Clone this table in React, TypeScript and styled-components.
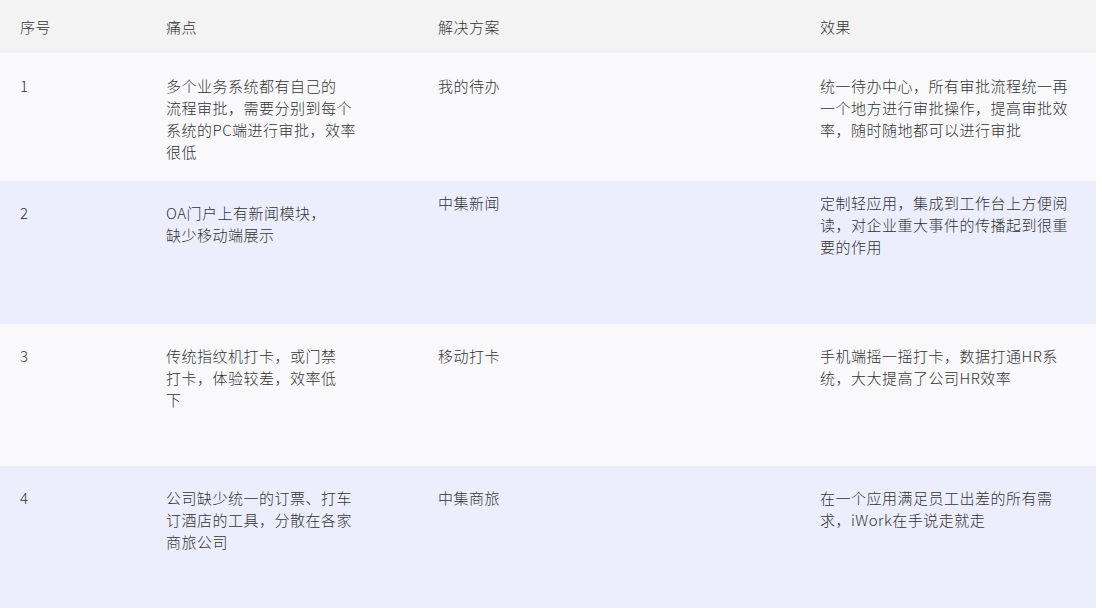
import React from 'react';
import styled, { createGlobalStyle } from 'styled-components';

const GlobalStyle = createGlobalStyle`
  body {
    margin: 0;
    background: #ffffff;
    font-family: "Noto Sans CJK SC", "Noto Sans", sans-serif;
  }
`;

const Table = styled.div`
  width: 1096px;
  color: #333333;
  font-size: 15px;
  font-weight: 300;
  line-height: 22px;
`;

const Row = styled.div<{ $bg: string; $height: number }>`
  display: grid;
  grid-template-columns: 146px 272px 382px 1fr;
  align-items: start;
  height: ${(p) => p.$height}px;
  background: ${(p) => p.$bg};
`;

const HeaderRow = styled(Row)`
  align-items: center;
`;

const Cell = styled.div<{ $top?: number }>`
  padding: ${(p) => p.$top ?? 0}px 0 0 20px;
  white-space: nowrap;
  letter-spacing: 0.5px;
`;

interface Item {
  no: string;
  pain: string[];
  solution: string;
  effect: string[];
  bg: string;
  height: number;
  painTop: number;
  sideTop: number;
}

const items: Item[] = [
  {
    no: '1',
    pain: ['多个业务系统都有自己的', '流程审批，需要分别到每个', '系统的PC端进行审批，效率', '很低'],
    solution: '我的待办',
    effect: ['统一待办中心，所有审批流程统一再', '一个地方进行审批操作，提高审批效', '率，随时随地都可以进行审批'],
    bg: '#f9f9fc',
    height: 128,
    painTop: 22,
    sideTop: 22,
  },
  {
    no: '2',
    pain: ['OA门户上有新闻模块，', '缺少移动端展示'],
    solution: '中集新闻',
    effect: ['定制轻应用，集成到工作台上方便阅', '读，对企业重大事件的传播起到很重', '要的作用'],
    bg: '#eceefd',
    height: 143,
    painTop: 21,
    sideTop: 11,
  },
  {
    no: '3',
    pain: ['传统指纹机打卡，或门禁', '打卡，体验较差，效率低', '下'],
    solution: '移动打卡',
    effect: ['手机端摇一摇打卡，数据打通HR系', '统，大大提高了公司HR效率'],
    bg: '#f9f9fc',
    height: 142,
    painTop: 21,
    sideTop: 21,
  },
  {
    no: '4',
    pain: ['公司缺少统一的订票、打车', '订酒店的工具，分散在各家', '商旅公司'],
    solution: '中集商旅',
    effect: ['在一个应用满足员工出差的所有需', '求，iWork在手说走就走'],
    bg: '#eceefd',
    height: 142,
    painTop: 21,
    sideTop: 21,
  },
];

const Lines: React.FC<{ lines: string[] }> = ({ lines }) => (
  <>
    {lines.map((line, i) => (
      <React.Fragment key={i}>
        {i > 0 && <br />}
        {line}
      </React.Fragment>
    ))}
  </>
);

export default function App() {
  return (
    <>
      <GlobalStyle />
      <Table>
        <HeaderRow $bg="#f3f3f3" $height={53}>
          <Cell>序号</Cell>
          <Cell>痛点</Cell>
          <Cell>解决方案</Cell>
          <Cell>效果</Cell>
        </HeaderRow>
        {items.map((item) => (
          <Row key={item.no} $bg={item.bg} $height={item.height}>
            <Cell $top={item.painTop}>{item.no}</Cell>
            <Cell $top={item.painTop}>
              <Lines lines={item.pain} />
            </Cell>
            <Cell $top={item.sideTop}>{item.solution}</Cell>
            <Cell $top={item.sideTop}>
              <Lines lines={item.effect} />
            </Cell>
          </Row>
        ))}
      </Table>
    </>
  );
}
